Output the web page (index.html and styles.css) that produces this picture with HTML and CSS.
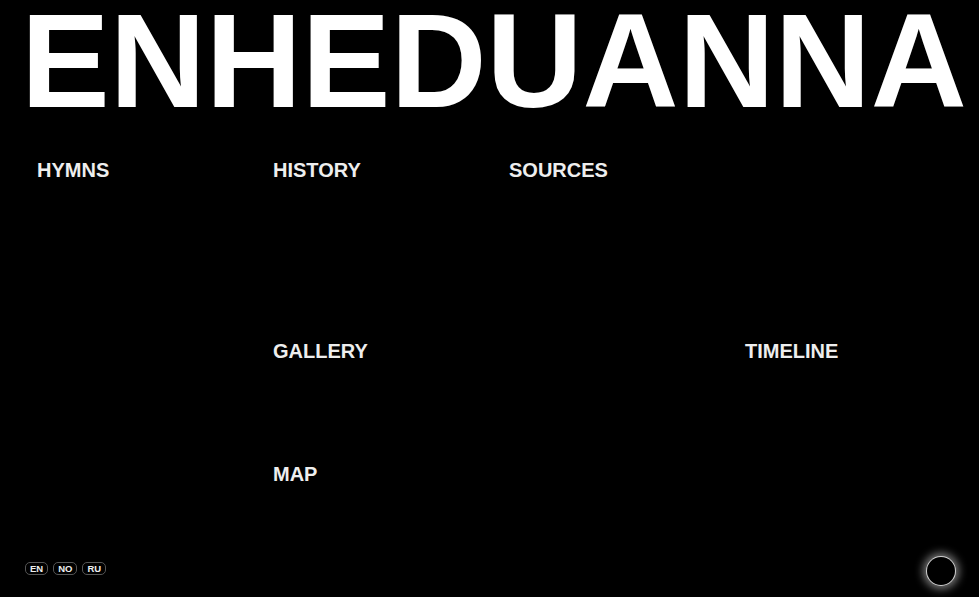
FILE: index.html
```html
<!DOCTYPE html>
<html lang="en">
<head>
<meta charset="utf-8">
<title>Enheduanna</title>
<link rel="stylesheet" href="styles.css">
</head>
<body>
<div class="page">
  <h1 class="title">ENHEDUANNA</h1>
  <nav class="nav">
    <a class="nav-item c1 r1" href="#">HYMNS</a>
    <a class="nav-item c2 r1" href="#">HISTORY</a>
    <a class="nav-item c3 r1" href="#">SOURCES</a>
    <a class="nav-item c2 r2" href="#">GALLERY</a>
    <a class="nav-item c4 r2" href="#">TIMELINE</a>
    <a class="nav-item c2 r3" href="#">MAP</a>
  </nav>
  <footer class="footer">
    <div class="langs">
      <button class="lang">EN</button>
      <button class="lang">NO</button>
      <button class="lang">RU</button>
    </div>
    <div class="orb"></div>
  </footer>
</div>
</body>
</html>
```
FILE: styles.css
```css
html, body {
  margin: 0;
  padding: 0;
  background: #000;
  height: 100%;
  overflow: hidden;
}
.page {
  height: 597px;
  display: flex;
  flex-direction: column;
  font-family: "Liberation Sans", Arial, sans-serif;
  color: #f2f2f2;
}
.title {
  margin: 0;
  padding: 0 0 0 21px;
  font-size: 133px;
  font-weight: 700;
  line-height: 122px;
  color: #fff;
  letter-spacing: 0;
  white-space: nowrap;
}
.nav {
  display: grid;
  grid-template-columns: repeat(4, 236px);
  grid-template-rows: 181px 123px 40px;
  padding: 37px 0 0 37px;
}
.nav-item {
  font-size: 20px;
  font-weight: 700;
  color: #eeeeee;
  text-decoration: none;
  line-height: 23px;
  align-self: start;
}
.c1 { grid-column: 1; }
.c2 { grid-column: 2; }
.c3 { grid-column: 3; }
.c4 { grid-column: 4; }
.r1 { grid-row: 1; }
.r2 { grid-row: 2; }
.r3 { grid-row: 3; }
.footer {
  margin-top: auto;
  display: flex;
  align-items: flex-end;
  justify-content: space-between;
  padding: 0 24px 12px 25px;
}
.langs {
  display: flex;
  gap: 5px;
  margin-bottom: 10px;
}
.lang {
  font-family: "Liberation Sans", Arial, sans-serif;
  font-size: 9.5px;
  font-weight: 700;
  color: #eee;
  background: #000;
  border: 1px solid #555;
  border-radius: 5px;
  padding: 0 4px;
  margin: 0;
  height: 13px;
  line-height: 11px;
  cursor: pointer;
}
.orb {
  width: 28px;
  height: 28px;
  border-radius: 50%;
  background: #000;
  box-shadow: 0 0 0 1px #cfcfcf, 0 0 9px 4px rgba(220, 220, 220, 0.55);
}
```
